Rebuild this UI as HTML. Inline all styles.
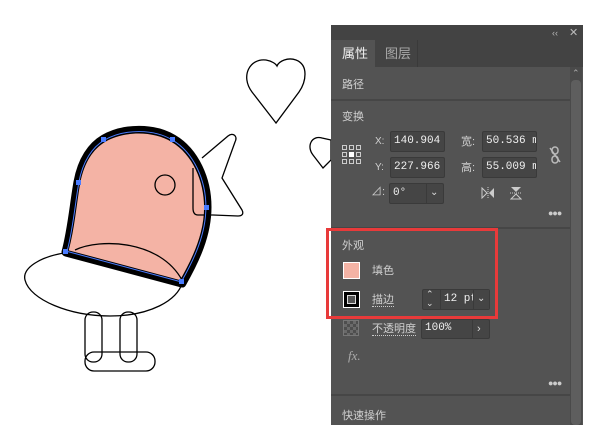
<!DOCTYPE html>
<html><head><meta charset="utf-8"><style>
*{margin:0;padding:0;box-sizing:border-box}
body{width:601px;height:425px;background:#fff;position:relative;overflow:hidden;font-family:"Liberation Sans","Noto Sans CJK SC",sans-serif;}
.a{position:absolute}
.t{position:absolute;color:#d0d0d0;font-size:11px;line-height:12px;white-space:nowrap}
.box{position:absolute;background:#454545;border:1px solid #3a3a3a;border-radius:2px;color:#f0f0f0;font-family:"Liberation Mono",monospace;font-size:11px;line-height:19px;padding-left:3px;overflow:hidden;white-space:nowrap}
</style></head><body>
<svg class="a" style="left:0;top:0" width="601" height="425">
<g fill="none" stroke="#000" stroke-width="1.3">
<path d="M276,123 L252,92 C240,76 250,58 266,60 C272,61 276,64 277,66 C279,61 288,57 296,60 C309,65 306,82 299,92 Z"/>
<path d="M323,168 L313,155 C306,146 312,135 322,138 L331,140 L331,160 Z"/>
<path d="M64,253 C40,257 22,268 25,280 C30,300 70,316 110,316 C150,316 178,300 182,283"/>
<rect x="85" y="312" width="17" height="50" rx="8"/>
<rect x="120" y="312" width="17" height="50" rx="8"/>
<rect x="85" y="352" width="70" height="19" rx="9"/>
</g>
<path d="M182,283 L66,252 C72,230 74,205 78,182 C82,160 92,146 104,139 C125,127 155,128 173,139 C195,152 207,180 207,207 C207,235 195,260 182,283 Z" fill="#f4b3a5" stroke="#000" stroke-width="9" stroke-linejoin="round"/>
<path d="M182,283 L66,252 C72,230 74,205 78,182 C82,160 92,146 104,139 C125,127 155,128 173,139 C195,152 207,180 207,207 C207,235 195,260 182,283 Z" fill="#f4b3a5" stroke="none" transform="translate(134,210) scale(0.96) translate(-134,-210)"/>
<g fill="none" stroke="#000" stroke-width="1.3">
<path d="M75,250 C100,238 160,240 182,280"/>
<circle cx="165" cy="185" r="10"/>
<path d="M202,158 L228,136 C233,132 238,136 235,142 L222,178 L242,210 C244,214 242,216 238,216 L213,215 L198,215 C194,215 193,212 193,208 L193,168"/>
</g>
<path d="M182,283 L66,252 C72,230 74,205 78,182 C82,160 92,146 104,139 C125,127 155,128 173,139 C195,152 207,180 207,207 C207,235 195,260 182,283" fill="none" stroke="#4a7cff" stroke-width="1" transform="translate(134,210) scale(0.985) translate(-134,-210)"/>
<g fill="#4a7cff"><rect x="63" y="249" width="5" height="5"/><rect x="179" y="279" width="5" height="5"/><rect x="76" y="180" width="5" height="5"/><rect x="101" y="137" width="5" height="5"/><rect x="170" y="137" width="5" height="5"/><rect x="204" y="205" width="5" height="5"/></g>
</svg>
<div class="a" style="left:331px;top:25px;width:252px;height:400px;background:#535353"></div>
<div class="a" style="left:331px;top:25px;width:252px;height:15px;background:#434343"></div>
<div class="t" style="left:552px;top:27px;font-size:9px;color:#bbb">‹‹</div>
<div class="t" style="left:569px;top:27px;font-size:11px;color:#bbb">✕</div>
<div class="a" style="left:331px;top:40px;width:252px;height:27px;background:#434343"></div>
<div class="a" style="left:331px;top:40px;width:44px;height:27px;background:#535353"></div>
<div class="a" style="left:375px;top:40px;width:43px;height:27px;border-right:1px solid #3a3a3a"></div>
<div class="t" style="left:342px;top:46px;font-size:13px;line-height:15px;color:#f0f0f0">属性</div>
<div class="t" style="left:385px;top:46px;font-size:13px;line-height:15px;color:#aaa">图层</div>
<div class="a" style="left:570px;top:67px;width:12px;height:358px;background:#4a4a4a"></div>
<div class="a" style="left:571px;top:80px;width:10px;height:345px;background:#5e5e5e;border-radius:4px"></div>
<div class="t" style="left:572px;top:67px;font-size:9px;color:#aaa">⌃</div>
<div class="t" style="left:342px;top:79px">路径</div>
<div class="a" style="left:331px;top:99px;width:239px;height:2px;background:#464646"></div>
<div class="t" style="left:342px;top:111px">变换</div>
<svg class="a" style="left:342px;top:145px" width="19" height="19"><g fill="none" stroke="#ccc" stroke-width="1"><rect x=".5" y=".5" width="4" height="4"/><rect x="7.5" y=".5" width="4" height="4"/><rect x="14.5" y=".5" width="4" height="4"/><rect x=".5" y="7.5" width="4" height="4"/><rect x="14.5" y="7.5" width="4" height="4"/><rect x=".5" y="14.5" width="4" height="4"/><rect x="7.5" y="14.5" width="4" height="4"/><rect x="14.5" y="14.5" width="4" height="4"/></g><rect x="7" y="7" width="5" height="5" fill="#fff"/></svg>
<div class="t" style="left:375px;top:136px;font-size:10px">X:</div>
<div class="t" style="left:375px;top:162px;font-size:10px">Y:</div>
<div class="box" style="left:390px;top:131px;width:55px;height:21px">140.904</div>
<div class="box" style="left:390px;top:157px;width:55px;height:21px">227.966</div>
<div class="t" style="left:461px;top:136px">宽:</div>
<div class="t" style="left:461px;top:162px">高:</div>
<div class="box" style="left:482px;top:131px;width:55px;height:21px">50.536 m</div>
<div class="box" style="left:482px;top:157px;width:55px;height:21px">55.009 m</div>
<svg class="a" style="left:549px;top:146px" width="12" height="18"><g fill="none" stroke="#bbb" stroke-width="1.5"><rect x="3" y="1" width="6" height="7" rx="3"/><rect x="3" y="10" width="6" height="7" rx="3"/><path d="M1,2 L11,16"/></g></svg>
<div class="t" style="left:371px;top:186px;color:#ccc">⊿:</div>
<div class="box" style="left:389px;top:183px;width:55px;height:21px">0°</div>
<div class="a" style="left:426px;top:184px;width:1px;height:19px;background:#3a3a3a"></div>
<div class="t" style="left:430px;top:187px;color:#ddd;font-size:10px">⌄</div>
<svg class="a" style="left:481px;top:187px" width="14" height="12"><path d="M1,1 L6,6 L1,11 Z" fill="none" stroke="#ccc"/><path d="M13,1 L8,6 L13,11 Z" fill="#ccc"/><path d="M7,0 V12" stroke="#ccc" stroke-dasharray="1,1"/></svg>
<svg class="a" style="left:510px;top:186px" width="12" height="14"><path d="M1,1 L11,1 L6,6 Z" fill="#ccc"/><path d="M1,13 L11,13 L6,8 Z" fill="none" stroke="#ccc"/><path d="M0,7 H12" stroke="#ccc" stroke-dasharray="1,1"/></svg>
<div class="t" style="left:548px;top:207px;color:#ccc;font-size:9px;letter-spacing:-1px">●●●</div>
<div class="a" style="left:331px;top:227px;width:239px;height:2px;background:#464646"></div>
<div class="t" style="left:342px;top:240px">外观</div>
<div class="a" style="left:343px;top:262px;width:17px;height:17px;background:#f4b3a5;border:1px solid #fff"></div>
<div class="t" style="left:372px;top:265px">填色</div>
<div class="a" style="left:343px;top:291px;width:17px;height:17px;background:#000;border:1px solid #fff"></div>
<div class="a" style="left:347px;top:295px;width:9px;height:9px;background:#535353;border:1px solid #ddd"></div>
<div class="t" style="left:372px;top:294px;border-bottom:1px dotted #ccc">描边</div>
<div class="box" style="left:422px;top:289px;width:68px;height:21px;padding-left:21px">12 pt</div>
<div class="a" style="left:440px;top:290px;width:1px;height:19px;background:#3a3a3a"></div>
<div class="a" style="left:473px;top:290px;width:26px;height:19px;background:#454545;border-left:1px solid #3a3a3a;width:16px"></div>
<div class="t" style="left:426px;top:290px;font-size:9px;line-height:9px;color:#ddd">⌃<br>⌄</div>
<div class="t" style="left:477px;top:293px;color:#ddd;font-size:10px">⌄</div>
<div class="a" style="left:343px;top:320px;width:16px;height:16px;background:repeating-conic-gradient(#6a6a6a 0 25%,#4e4e4e 0 50%) 0 0/6px 6px;border:1px solid #777"></div>
<div class="t" style="left:372px;top:323px;border-bottom:1px dotted #ccc">不透明度</div>
<div class="box" style="left:421px;top:319px;width:69px;height:20px;line-height:17px">100%</div>
<div class="a" style="left:472px;top:320px;width:1px;height:18px;background:#3a3a3a"></div>
<div class="t" style="left:477px;top:323px;color:#ddd">›</div>
<div class="t" style="left:348px;top:350px;font-size:13px;color:#aaa;font-style:italic;font-family:'Liberation Serif',serif">fx.</div>
<div class="t" style="left:548px;top:377px;color:#ccc;font-size:9px;letter-spacing:-1px">●●●</div>
<div class="a" style="left:331px;top:394px;width:239px;height:2px;background:#464646"></div>
<div class="t" style="left:342px;top:410px">快速操作</div>
<div class="a" style="left:326px;top:228px;width:172px;height:91px;border:3px solid #e83a3a"></div>
</body></html>
